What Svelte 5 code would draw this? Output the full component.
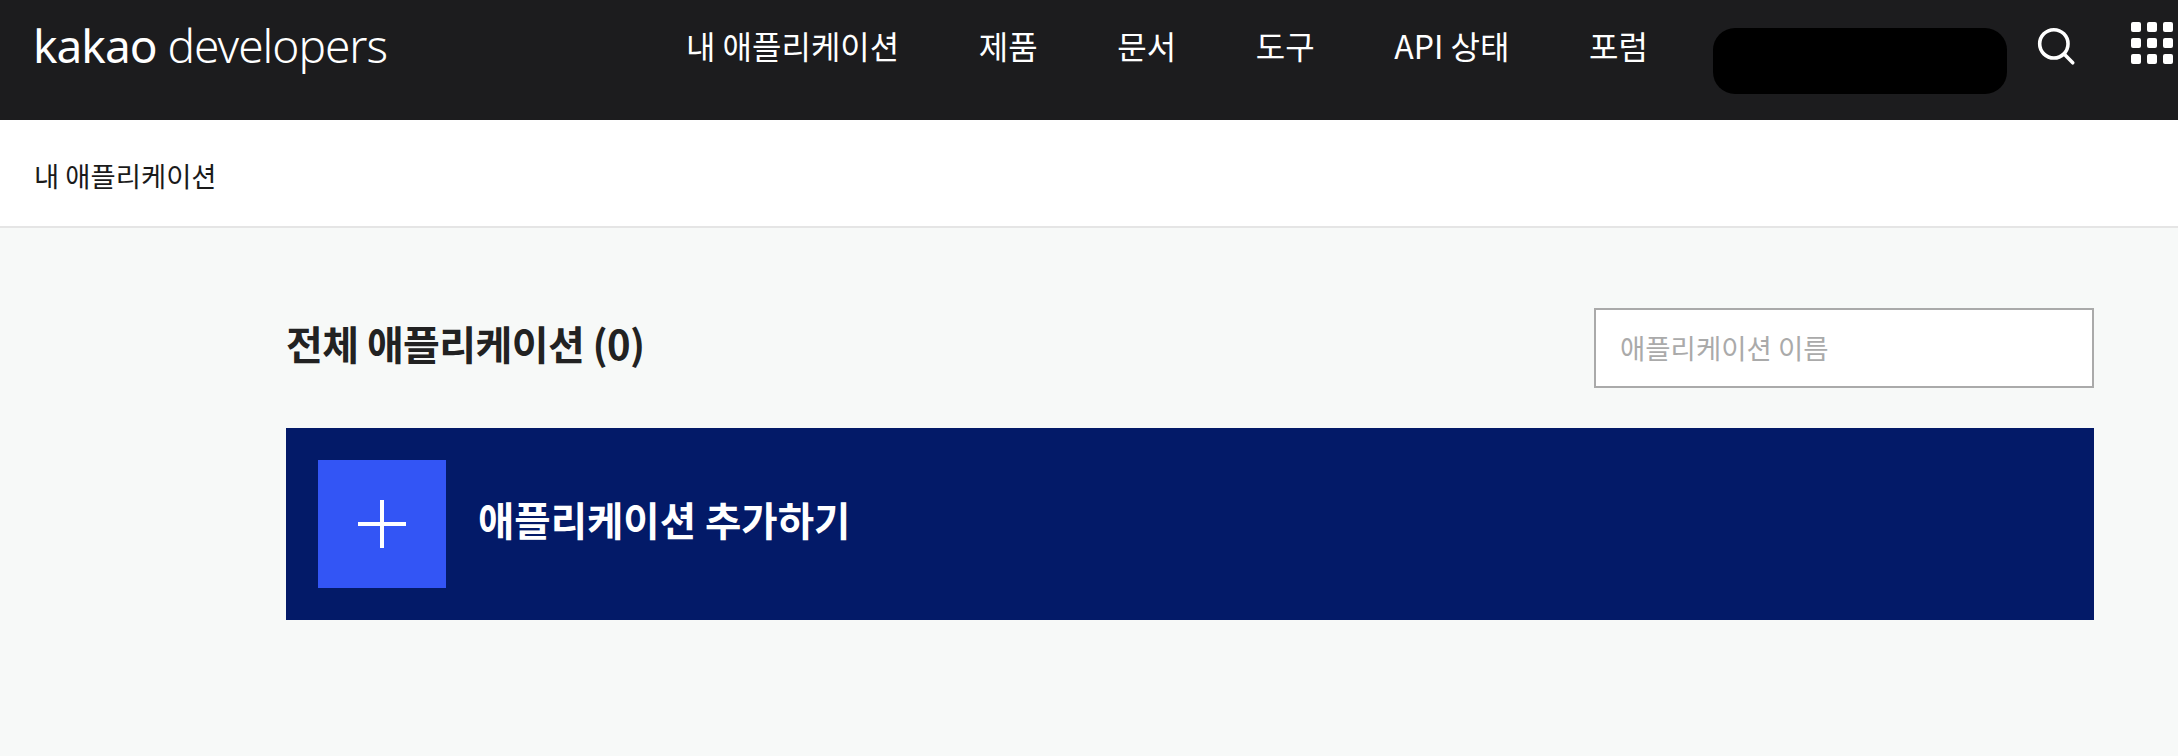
<script>
  const nav = ['내 애플리케이션', '제품', '문서', '도구', 'API 상태', '포럼'];
</script>

<div class="page">
  <header class="top">
    <a class="logo" href="#top"><span class="kakao">kakao</span> developers</a>
    <nav class="menu">
      {#each nav as item}
        <a href="#top">{item}</a>
      {/each}
    </nav>
    <div class="account"></div>
    <svg class="search" width="42" height="42" viewBox="0 0 40 40" aria-label="검색">
      <circle cx="17" cy="17" r="13.5" fill="none" stroke="#fff" stroke-width="3.4" />
      <line x1="27" y1="27" x2="35" y2="35" stroke="#fff" stroke-width="3.4" stroke-linecap="round" />
    </svg>
    <div class="apps">
      {#each Array(9) as _}
        <i></i>
      {/each}
    </div>
  </header>

  <div class="crumb">내 애플리케이션</div>

  <main class="content">
    <div class="head">
      <h1>전체 애플리케이션 (0)</h1>
      <input type="text" placeholder="애플리케이션 이름" />
    </div>
    <button class="add">
      <span class="plus">
        <svg width="48" height="48" viewBox="0 0 48 48">
          <path d="M0 24H48M24 0V48" stroke="#fff" stroke-width="4" fill="none" />
        </svg>
      </span>
      <span class="add-label">애플리케이션 추가하기</span>
    </button>
  </main>
</div>

<style>
  :global(body) {
    margin: 0;
    background: #f7f9f8;
  }
  .page {
    height: 756px;
    overflow: hidden;
    display: flex;
    flex-direction: column;
    font-family: "Noto Sans CJK KR", "Noto Sans", sans-serif;
  }
  .top {
    height: 120px;
    flex: none;
    background: #1c1c1e;
    display: flex;
    align-items: flex-start;
    padding-left: 33px;
    overflow: hidden;
  }
  .logo {
    font-family: "Noto Sans", sans-serif;
    font-weight: 300;
    font-size: 46px;
    letter-spacing: -1px;
    line-height: 64px;
    margin-top: 13px;
    color: #fff;
    text-decoration: none;
    white-space: nowrap;
    width: 653px;
    flex: none;
  }
  .kakao {
    font-weight: 400;
  }
  .menu {
    display: flex;
    gap: 79.6px;
    margin-top: 22px;
  }
  .menu a {
    color: #fff;
    text-decoration: none;
    font-size: 32px;
    line-height: 46px;
    white-space: nowrap;
  }
  .account {
    width: 294px;
    height: 66px;
    margin: 28px 0 0 65px;
    background: #000;
    border-radius: 22px;
    flex: none;
  }
  .search {
    flex: none;
    margin: 26px 0 0 29px;
  }
  .apps {
    flex: none;
    display: grid;
    grid-template-columns: repeat(3, 10px);
    grid-auto-rows: 10px;
    gap: 6px;
    margin: 22px 0 0 53px;
  }
  .apps i {
    background: #fff;
    border-radius: 2px;
  }
  .crumb {
    height: 102px;
    flex: none;
    background: #fff;
    border-bottom: 2px solid #e5e5e5;
    padding: 4px 0 0 34px;
    display: flex;
    align-items: center;
    font-size: 27.4px;
    color: #1a1a1a;
  }
  .content {
    padding: 80px 84px 0 286px;
    display: flex;
    flex-direction: column;
    gap: 40px;
  }
  .head {
    display: flex;
    justify-content: space-between;
    align-items: center;
  }
  h1 {
    margin: 0;
    padding-bottom: 10px;
    font-size: 40px;
    font-weight: 700;
    letter-spacing: -0.6px;
    color: #222;
  }
  input {
    width: 500px;
    height: 80px;
    box-sizing: border-box;
    border: 2px solid #aaa;
    background: #fff;
    padding: 0 24px 2px;
    font: inherit;
    font-size: 27.5px;
    outline: none;
  }
  input::placeholder {
    color: #aaa;
  }
  .add {
    height: 192px;
    border: 0;
    background: #031a68;
    padding: 32px;
    display: flex;
    align-items: center;
    gap: 32px;
    color: #fff;
    font: inherit;
    font-size: 39.5px;
    font-weight: 700;
    text-align: left;
  }
  .add-label {
    padding-bottom: 12px;
  }
  .plus {
    width: 128px;
    height: 128px;
    background: #3355f5;
    display: flex;
    align-items: center;
    justify-content: center;
    flex: none;
  }
</style>
